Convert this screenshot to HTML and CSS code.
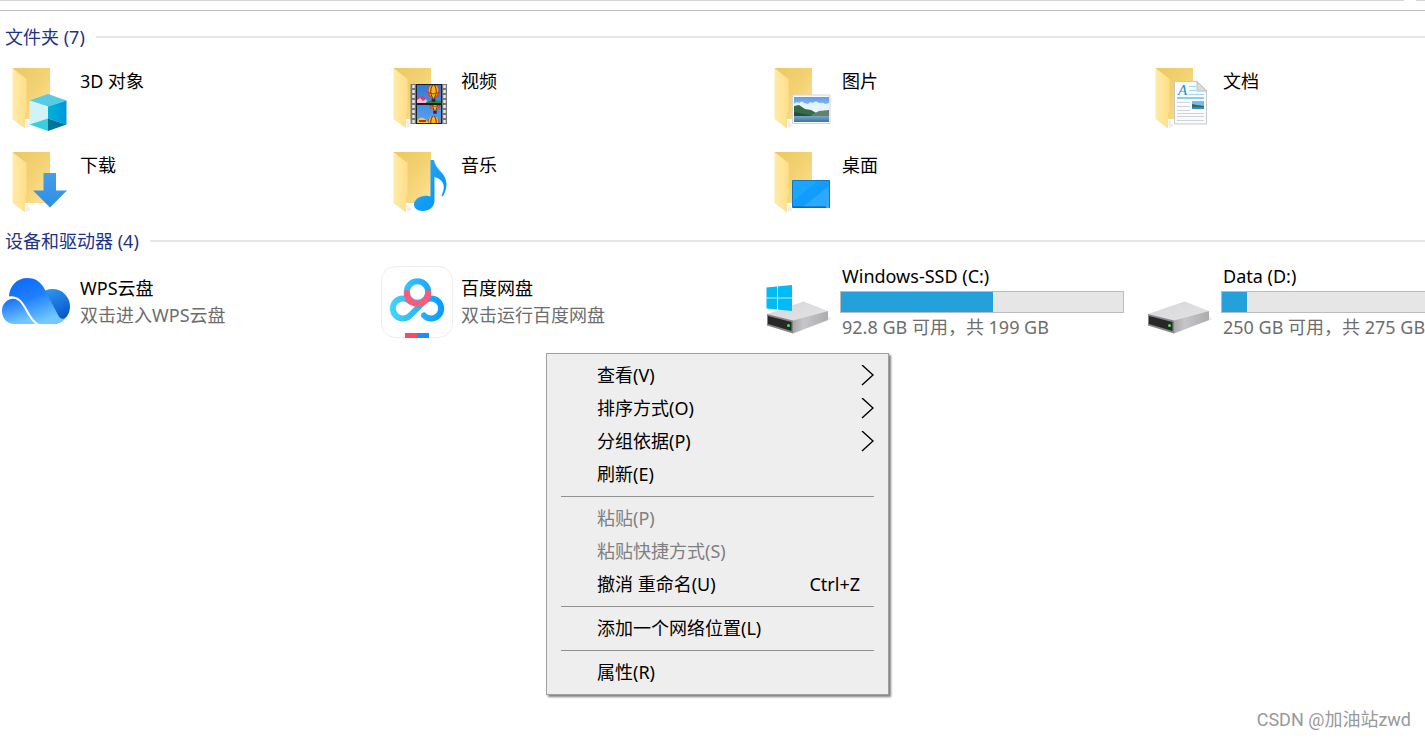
FILE: index.html
```html
<!DOCTYPE html>
<html lang="zh-CN">
<head>
<meta charset="utf-8">
<title>此电脑</title>
<link rel="stylesheet" href="styles.css">
</head>
<body>
<svg class="defs" aria-hidden="true">
  <defs>
    <linearGradient id="gBack" x1="0" y1="0" x2="1" y2="1"><stop offset="0" stop-color="#ecc862"/><stop offset=".5" stop-color="#f3d273"/><stop offset="1" stop-color="#ffe296"/></linearGradient>
    <linearGradient id="gFlap" x1="0" y1="0" x2="1" y2="0"><stop offset="0" stop-color="#ffeba8"/><stop offset="1" stop-color="#fddf87"/></linearGradient>
    <linearGradient id="gArrow" x1="0" y1="0" x2="0" y2="1"><stop offset="0" stop-color="#479de8"/><stop offset="1" stop-color="#2c8fe8"/></linearGradient>
    <linearGradient id="gRight" x1="0" y1="0" x2="1" y2="0"><stop offset="0" stop-color="#00b2da"/><stop offset="1" stop-color="#0096dc"/></linearGradient>
    <linearGradient id="gNote" x1="0" y1="0" x2="1" y2="1"><stop offset="0" stop-color="#29adff"/><stop offset="1" stop-color="#0090f5"/></linearGradient>
    <linearGradient id="gSky" x1="0" y1="0" x2="0" y2="1"><stop offset="0" stop-color="#5f9df0"/><stop offset="1" stop-color="#d9efff"/></linearGradient>
    <linearGradient id="gLake" x1="0" y1="0" x2="0" y2="1"><stop offset="0" stop-color="#79a9cb"/><stop offset="1" stop-color="#3c7299"/></linearGradient>
    <linearGradient id="gFilm" x1="0" y1="0" x2="0" y2="1"><stop offset="0" stop-color="#3578d6"/><stop offset="1" stop-color="#5aa0ee"/></linearGradient>
    <linearGradient id="gCloud" x1="0" y1="0" x2=".5" y2="1"><stop offset="0" stop-color="#0a66f5"/><stop offset=".5" stop-color="#1f7fff"/><stop offset="1" stop-color="#72c8ff"/></linearGradient>
    <linearGradient id="gCloudL" x1="0" y1="0" x2=".4" y2="1"><stop offset="0" stop-color="#0c68f6"/><stop offset="1" stop-color="#72c8ff"/></linearGradient>
    <linearGradient id="gCloudR" x1="0" y1="0" x2=".5" y2="1"><stop offset="0" stop-color="#35a2f3"/><stop offset="1" stop-color="#0756c9"/></linearGradient>
    <linearGradient id="gCyan" gradientUnits="userSpaceOnUse" x1="9" y1="0" x2="63" y2="0"><stop offset="0" stop-color="#45d4ff"/><stop offset="1" stop-color="#089bff"/></linearGradient>
    <linearGradient id="gTop" x1="0" y1="0" x2="1" y2="1"><stop offset="0" stop-color="#d6d6d8"/><stop offset="1" stop-color="#e4e4e7"/></linearGradient>
    <linearGradient id="gSide" x1="0" y1="0" x2="1" y2="0"><stop offset="0" stop-color="#a9a9ab"/><stop offset=".3" stop-color="#c6c6c8"/><stop offset="1" stop-color="#acacaf"/></linearGradient>
    <symbol id="folder" viewBox="0 0 72 72">
      <path d="M26 66l5-2-4-5h-2z" fill="#eee"/>
      <path d="M13 6h37v51H13z" fill="url(#gBack)"/>
      <path d="M12.500 6L26.500 17v31c0 2-1.500 2-1.500 4v14.500L12.500 57z" fill="url(#gFlap)"/>
    </symbol>
    <symbol id="balloon" viewBox="0 0 14 18">
      <ellipse cx="7" cy="7" rx="6.500" ry="7" fill="#e8401c"/>
      <path d="M3 1.500Q0 7 5 13L7 14 9 13Q14 7 11 1.500Q7-1 3 1.500z" fill="#f8b912"/>
      <path d="M6 0Q2 6 6 14M8 0q4 6 0 14" fill="none" stroke="#5b2131"/>
      <path d="M1 8q6 3 12 0" fill="none" stroke="#8b3d16"/>
      <path d="M5 14.500h4V18H5z" fill="#452323"/>
    </symbol>
    <symbol id="drive" viewBox="0 0 72 72">
      <path d="M31 67l39-14-5-3-34 12z" fill="#eee"/>
      <path d="M5 48l36.500-12.500L66 45 31 55z" fill="url(#gTop)"/>
      <path d="M31 54.500L66 45v9L31 67.500z" fill="url(#gSide)"/>
      <path d="M5 48l26 6.500v13L5 59.500z" fill="#858587"/>
      <path d="M6 50l23.500 6v9L6 58z" fill="#272727"/>
      <circle cx="26.500" cy="59.500" r="1.500" fill="#3cf03c"/>
    </symbol>
  </defs>
</svg>

<div class="toolbar-edge"><span class="edge-long"></span><span class="edge-short"></span></div>
<main class="explorer">
  <section class="group">
    <h2 class="group-title">文件夹 (7)</h2>
    <div class="tiles">
      <article class="tile">
        <svg class="icon" viewBox="0 0 72 72"><use href="#folder"/>
          <path d="M48 32l18.500 6.500L48 44.500 29.500 38.500z" fill="#55cbe5"/>
          <path d="M29.500 38.500L48 44.500v12L29.500 62.500z" fill="#d2f3f6"/>
          <path d="M66.500 38.500L48 44.500v12l18.500 6z" fill="url(#gRight)"/>
          <path d="M29.500 62.500l18.500-6v12.500z" fill="#37cfdd"/>
          <path d="M66.500 62.500l-18.500-6v12.500z" fill="#00759a"/></svg>
        <div class="info"><span class="name">3D 对象</span></div>
      </article>
      <article class="tile">
        <svg class="icon" viewBox="0 0 72 72"><use href="#folder"/>
          <path d="M29.500 22H66v40H29.500z" fill="#777"/>
          <path d="M32.500 23v39M63.500 23v39" stroke="#e8e8e8" stroke-width="2.500" stroke-dasharray="3 2"/>
          <path d="M35 22h26v40H35z" fill="#1b1d26"/>
          <path d="M36 23h24v18H36zM36 43h24v18H36z" fill="url(#gFilm)"/>
          <path d="M36 33l3 3 2-3 5 6v2H36z" fill="#db4068"/><path d="M36 38l3-2 3 3 3-2 2 4H36z" fill="#f3b8df"/>
          <path d="M45 40q7-3 15-1v2H45z" fill="#318a31"/>
          <use href="#balloon" x="46" y="23" width="13" height="17"/>
          <svg x="48" y="43" width="12" height="9" viewBox="0 7 12 9"><use href="#balloon" width="12" height="16"/></svg>
          <svg x="46" y="54" width="13" height="7" viewBox="0 0 13 7"><use href="#balloon" width="13" height="17"/></svg>
          <path d="M37 57q4-3 7 0t4 4H36z" fill="#f4ca29"/><path d="M38 59h7" stroke="#be284c" stroke-width="2"/></svg>
        <div class="info"><span class="name">视频</span></div>
      </article>
      <article class="tile">
        <svg class="icon" viewBox="0 0 72 72"><use href="#folder"/>
          <path d="M30.500 33h37.500v28.500H30.500z" fill="#fafafa" stroke="#d4d4d4"/>
          <path d="M32 35h35v25H32z" fill="url(#gSky)"/>
          <path d="M32 42q3-3 5-1 3-3 5 0l4 1q2-3 5-1 3-3 6 0 4-1 6 1l4-1v12H32z" fill="#e6f4ff"/>
          <path d="M32 44l5-1 6 4 6 1 7 4 11 2H32z" fill="#366b48"/>
          <path d="M51 52l6-3 10-1v6H49z" fill="#61806e"/>
          <path d="M32 54h35v6H32z" fill="url(#gLake)"/><path d="M32 50l10 2 8 2H32z" fill="#244e35"/></svg>
        <div class="info"><span class="name">图片</span></div>
      </article>
      <article class="tile">
        <svg class="icon" viewBox="0 0 72 72"><use href="#folder"/>
          <path d="M31.500 19.500H54l9.500 9.500v33h-32z" fill="#f9fbfc" stroke="#c5c9cc"/>
          <path d="M54 19.500V29h9.500z" fill="#d9dde0" stroke="#b9bec2"/>
          <text x="35" y="33" class="doc-letter">A</text>
          <path d="M46 24.500h7M46 28.500h7M46 32.500h15" stroke="#a0d7f1" stroke-width="1"/>
          <path d="M34 36h27" stroke="#8fcdec" stroke-width="2"/>
          <path d="M34 40.500h13M34 44.500h13M34 48.500h13M34 51.500h27M34 54.500h27M34 58.500h27" stroke="#cdd3d7"/>
          <path d="M49 39h12v8H49z" fill="#72bdf0"/><path d="M49 42l5 1 7 1v2H49z" fill="#2f6a5c"/><path d="M49 45h12v2H49z" fill="#3e88bd"/></svg>
        <div class="info"><span class="name">文档</span></div>
      </article>
      <article class="tile">
        <svg class="icon" viewBox="0 0 72 72"><use href="#folder"/>
          <path d="M43.500 27H56v17.500h11L50 61.500 33 44.500h10.500z" fill="url(#gArrow)"/></svg>
        <div class="info"><span class="name">下载</span></div>
      </article>
      <article class="tile">
        <svg class="icon" viewBox="0 0 72 72"><use href="#folder"/>
          <path d="M49.500 14H53c2 11 12 12 12.500 24 0 5-2 10-4 12.500l-1-1C66 39 61 33 53.500 31v23.500C53.500 61 48 65 41.500 65 36 65 33 62 33 58.500c0-5 7-9.500 14-8.500l2.500.5z" fill="url(#gNote)"/></svg>
        <div class="info"><span class="name">音乐</span></div>
      </article>
      <article class="tile">
        <svg class="icon" viewBox="0 0 72 72"><use href="#folder"/>
          <path d="M30.500 34.500h37v27h-37z" fill="#109dff" stroke="#1278bd"/>
          <path d="M67 40v21H41z" fill="#2ba9ff"/><path d="M31 35h25L31 55z" fill="#1ca5ff"/>
          <path d="M31 61h37" stroke="#075f9c"/><path d="M64 61h3" stroke="#9cd4f7"/></svg>
        <div class="info"><span class="name">桌面</span></div>
      </article>
    </div>
  </section>

  <section class="group devices">
    <h2 class="group-title">设备和驱动器 (4)</h2>
    <div class="tiles">
      <article class="tile">
        <svg class="icon" viewBox="0 0 72 72">
          <circle cx="52.500" cy="40.500" r="17.500" fill="url(#gCloudR)"/>
          <path d="M9 31C9 20 17 12 27.500 12c8 0 13 4 16.500 10l14 27c2 4 5 5 8 2-3 5-8 7-13 7H36C26 51 25 31 9 31z" fill="url(#gCloud)"/>
          <path d="M14.500 32.500C25 32 26 51 36 58H14.500C7 58 2 52 2 45s5-12.500 12.500-12.500z" fill="url(#gCloudL)"/>
          <path d="M8 31.500C26 28 25 52 38 58.500" fill="none" stroke="#fff" stroke-width="2"/></svg>
        <div class="info"><span class="name">WPS云盘</span><span class="detail">双击进入WPS云盘</span></div>
      </article>
      <article class="tile">
        <svg class="icon" viewBox="0 0 72 72">
          <rect x=".5" y=".5" width="71" height="71" rx="14" fill="#fff" stroke="#ededed"/>
          <g fill="none" stroke-width="6" stroke-linecap="round">
            <circle cx="36.500" cy="26" r="10.700" stroke="url(#gCyan)"/>
            <path d="M43 49.500A10 10 0 1 0 43 35.500L29 49.500A10 10 0 1 1 29 35.500" stroke="url(#gCyan)"/>
            <path d="M25.800 27a10.700 10.700 0 0 0 21.400 0" stroke="#ff5878"/>
          </g>
          <path d="M24 67h12v5H24z" fill="#ff4568"/><path d="M36 67h12v5H36z" fill="#1f8cff"/></svg>
        <div class="info"><span class="name">百度网盘</span><span class="detail">双击运行百度网盘</span></div>
      </article>
      <article class="tile">
        <svg class="icon" viewBox="0 0 72 72"><use href="#drive"/>
          <path d="M4.500 21.500L30 19v26L4.500 42.500z" fill="#00bcf2"/>
          <path d="M15.500 20v24M4 32h26.500" stroke="#c4eefa"/></svg>
        <div class="info"><label class="name" for="drive-c">Windows-SSD (C:)</label>
          <progress class="usage" id="drive-c" max="100" value="54"></progress>
          <span class="detail">92.8 GB 可用，共 199 GB</span></div>
      </article>
      <article class="tile">
        <svg class="icon" viewBox="0 0 72 72"><use href="#drive"/></svg>
        <div class="info"><label class="name" for="drive-d">Data (D:)</label>
          <progress class="usage" id="drive-d" max="100" value="9"></progress>
          <span class="detail">250 GB 可用，共 275 GB</span></div>
      </article>
    </div>
  </section>
</main>

<div class="menu" role="menu">
  <button class="item" role="menuitem">查看(V)<svg class="chevron" viewBox="0 0 13 22"><path d="M1 0l11 10L1 20"/></svg></button>
  <button class="item" role="menuitem">排序方式(O)<svg class="chevron" viewBox="0 0 13 22"><path d="M1 0l11 10L1 20"/></svg></button>
  <button class="item" role="menuitem">分组依据(P)<svg class="chevron" viewBox="0 0 13 22"><path d="M1 0l11 10L1 20"/></svg></button>
  <button class="item" role="menuitem">刷新(E)</button>
  <hr class="separator">
  <button class="item" role="menuitem" disabled>粘贴(P)</button>
  <button class="item" role="menuitem" disabled>粘贴快捷方式(S)</button>
  <button class="item" role="menuitem">撤消 重命名(U)<span class="shortcut">Ctrl+Z</span></button>
  <hr class="separator">
  <button class="item" role="menuitem">添加一个网络位置(L)</button>
  <hr class="separator">
  <button class="item" role="menuitem">属性(R)</button>
</div>
<div class="watermark">CSDN @加油站zwd</div>
</body>
</html>
```
FILE: styles.css
```css
* { box-sizing: border-box; }

body {
  position: relative;
  min-height: 100vh;
  margin: 0;
  overflow: hidden;
  background: #fff;
  color: #000;
  font: 18px/27px "Noto Sans", "Noto Sans CJK SC", sans-serif;
}

.defs { position: absolute; width: 0; height: 0; }

.toolbar-edge {
  display: flex;
  gap: 12px;
  height: 11px;
  border-bottom: 1px solid #bdbdbd;
}
.edge-long, .edge-short { height: 1px; background: #d8d8d8; }
.edge-long { flex: 1; }
.edge-short { width: 9px; }

.explorer {
  padding-top: 13px;
  overflow: hidden;
}
.group { margin-bottom: 10px; }

.group-title {
  display: flex;
  align-items: center;
  gap: 11px;
  height: 26px;
  margin: 0 0 12px;
  padding-left: 5px;
  color: #1e3287;
  font-size: 18px;
  font-weight: 400;
  white-space: nowrap;
}
.group-title::after {
  flex: 1;
  height: 2px;
  background: #e5e5e5;
  content: "";
}

.tiles {
  display: grid;
  grid-template-columns: repeat(4, 381px);
  row-gap: 12px;
}
.tile { display: flex; gap: 6px; }
.icon { flex: none; width: 72px; height: 72px; }
.info {
  display: flex;
  flex: 1;
  flex-direction: column;
  padding-top: 6px;
  white-space: nowrap;
}
.name, .detail { padding-left: 2px; }
.detail { color: #6d6d6d; }

.devices .group-title { margin-bottom: 9px; }
.devices .tile { align-items: center; }
.devices .info { padding-top: 0; }

.usage {
  width: 284px;
  height: 22px;
  margin: 1px 0;
  border: 1px solid #bcbcbc;
  background: #e6e6e6;
  appearance: none;
}
.usage::-webkit-progress-bar { background: #e6e6e6; }
.usage::-webkit-progress-value { background: #26a0da; }

.doc-letter {
  fill: #2090cf;
  font: italic 15px "Liberation Serif", serif;
}

.menu {
  position: absolute;
  top: 353px;
  left: 546px;
  display: flex;
  flex-direction: column;
  width: 343px;
  padding: 5px 0;
  border: 1px solid #a0a0a0;
  background: #eee;
  box-shadow: 2px 2px 2px rgba(0, 0, 0, .5);
}
.item {
  display: flex;
  align-items: center;
  justify-content: space-between;
  height: 33px;
  padding: 0 14px 0 50px;
  border: 0;
  background: none;
  color: #000;
  font: inherit;
}
.item:disabled { color: #808080; }
.item:enabled:hover { background: #fff; }
.shortcut { padding-right: 14px; }
.chevron {
  width: 13px;
  height: 22px;
  fill: none;
  stroke: #000;
  stroke-width: 1.4;
}
.separator {
  width: 313px;
  height: 1px;
  margin: 5px 14px;
  border: 0;
  background: #919191;
}

.watermark {
  position: absolute;
  right: 14px;
  bottom: 5px;
  color: #999;
  font-family: Roboto, "Noto Sans CJK SC", sans-serif;
}
```
